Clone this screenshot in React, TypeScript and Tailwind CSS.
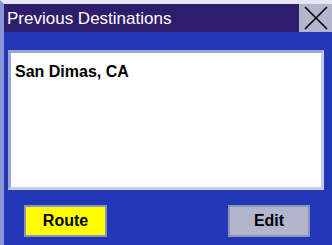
export default function App() {
  return (
    <div
      className="w-[332px] h-[245px] overflow-hidden bg-[#2236b8] border-t-4 border-t-[#e4e6f0] border-l-4 border-l-[#8a94d6] flex flex-col"
      style={{ fontFamily: '"Liberation Sans", Arial, sans-serif' }}
    >
      {/* Title bar */}
      <div className="flex h-[28px] shrink-0">
        <div className="flex-1 bg-[#2e1c6c] flex items-center pl-[3px]">
          <span className="text-white text-[17px] leading-none pt-[1px]">Previous Destinations</span>
        </div>
        <button className="w-[33px] h-full bg-[#b2b6cc] flex items-center justify-center">
          <svg width="26" height="24" viewBox="0 0 26 24">
            <path d="M2 1 L24 23 M24 1 L2 23" stroke="#000" strokeWidth="1.6" fill="none" />
          </svg>
        </button>
      </div>

      {/* List */}
      <div className="mt-[18px] ml-[4px] mr-[8px] h-[140px] shrink-0 bg-white border-[3px] border-t-[#9ea6d0] border-l-[#9ea6d0] border-r-[#c8cce0] border-b-[#c8cce0]">
        <div className="pl-[4px] pt-[11px] text-[16px] font-bold text-black leading-none">San Dimas, CA</div>
      </div>

      {/* Buttons */}
      <div className="flex justify-between mt-[15px] ml-[20px] mr-[22px]">
        <button className="w-[83px] h-[32px] bg-[#ffff00] border-2 border-[#8c92b8] text-[16px] font-bold text-black leading-none">
          Route
        </button>
        <button className="w-[82px] h-[32px] bg-[#b2b6cc] border-2 border-[#8c92b8] text-[16px] font-bold text-black leading-none">
          Edit
        </button>
      </div>
    </div>
  );
}
